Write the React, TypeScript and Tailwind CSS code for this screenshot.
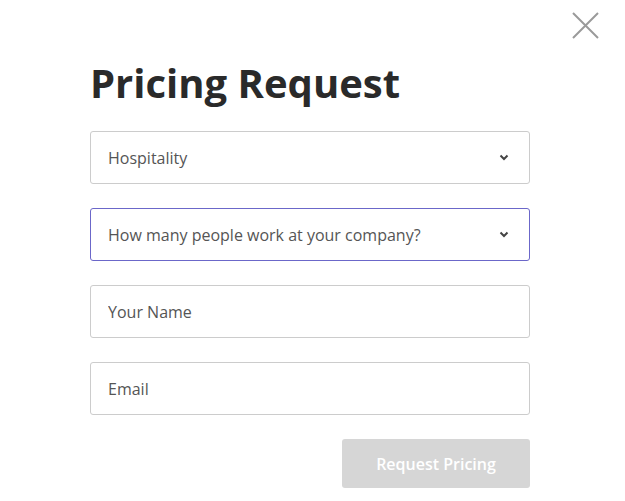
import { useState } from 'react'

const field = 'flex h-[53px] w-full items-center rounded-[3px] border bg-white pl-[17px] pr-[20px] text-[16px] text-[#555]'

function Chevron() {
  return (
    <svg width="10" height="7" viewBox="0 0 10 7" className="ml-auto">
      <path d="M1.5 1.5 L5 5 L8.5 1.5" fill="none" stroke="#444" strokeWidth="2" />
    </svg>
  )
}

export default function App() {
  const [name, setName] = useState('')
  const [email, setEmail] = useState('')

  return (
    <div className="relative h-[501px] w-[625px] bg-white" style={{ fontFamily: '"Open Sans", sans-serif' }}>
      {/* close */}
      <button className="absolute right-[26px] top-[12px] h-[27px] w-[27px]" aria-label="Close">
        <svg width="27" height="27" viewBox="0 0 27 27">
          <path d="M1 1 L26 26 M26 1 L1 26" stroke="#9a9a9a" strokeWidth="2" />
        </svg>
      </button>

      <div className="ml-[90px] w-[440px] pt-[56px]">
        <h1 className="text-[40px] font-bold leading-[54px] text-[#2a2a2a]">Pricing Request</h1>

        <div className="mt-[21px] flex flex-col gap-6">
          <div className={`${field} border-[#cccccc]`}>
            <span>Hospitality</span>
            <Chevron />
          </div>
          <div className={`${field} border-[#6b67c9]`}>
            <span>How many people work at your company?</span>
            <Chevron />
          </div>
          <input
            className={`${field} border-[#cccccc] outline-none placeholder:text-[#555]`}
            placeholder="Your Name"
            value={name}
            onChange={(e) => setName(e.target.value)}
          />
          <input
            className={`${field} border-[#cccccc] outline-none placeholder:text-[#555]`}
            placeholder="Email"
            value={email}
            onChange={(e) => setEmail(e.target.value)}
          />
        </div>

        <div className="mt-6 flex justify-end">
          <button className="h-[49px] w-[188px] rounded-[3px] bg-[#d6d6d6] text-[16px] font-semibold text-white">
            Request Pricing
          </button>
        </div>
      </div>
    </div>
  )
}
